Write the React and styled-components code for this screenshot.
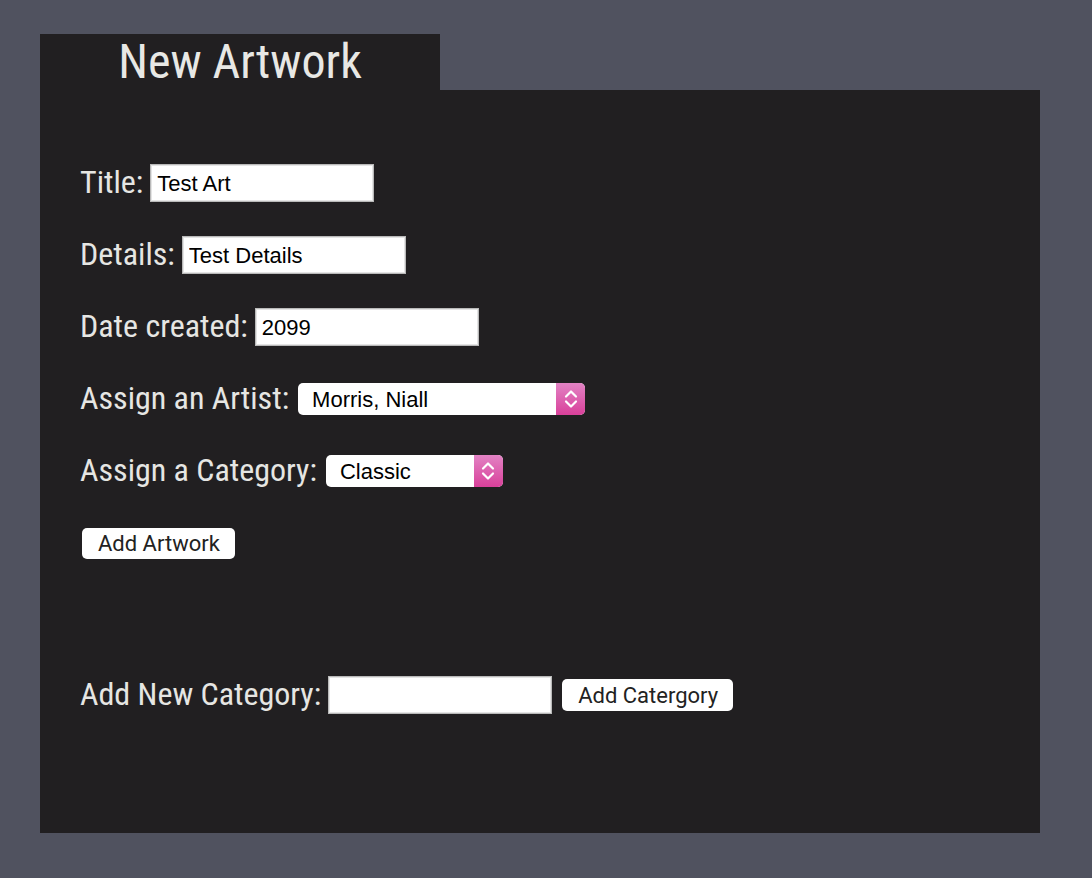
import React from 'react';
import styled, { createGlobalStyle } from 'styled-components';

const GlobalStyle = createGlobalStyle`
  body {
    margin: 0;
    background: #50525f;
    font-family: "Roboto Condensed", Roboto, sans-serif;
  }
`;

const Page = styled.div`
  padding: 34px 52px 45px 40px;
`;

const Tab = styled.div`
  width: 400px;
  height: 56px;
  background: #211f21;
  color: #e8e8e5;
  display: flex;
  align-items: center;
  justify-content: center;
  font-family: "Roboto Condensed", Roboto, sans-serif;
  font-stretch: condensed;
  font-size: 48px;
  line-height: 1;
`;

const Panel = styled.div`
  width: 1000px;
  height: 743px;
  box-sizing: border-box;
  background: #211f21;
  padding: 74px 40px 0;
  display: flex;
  flex-direction: column;
  gap: 34px;
`;

const Row = styled.div`
  display: flex;
  align-items: center;
  height: 38px;
  margin-top: ${p => p.$spaceTop || 0}px;
`;

const Label = styled.label`
  color: #e6e6e3;
  font-family: "Roboto Condensed", Roboto, sans-serif;
  font-stretch: condensed;
  font-size: 32px;
  line-height: 1;
  margin: 0 7px 3px 0;
  white-space: nowrap;
`;

const TextInput = styled.input`
  width: 224px;
  height: 38px;
  box-sizing: border-box;
  border: 1px solid #b9b9b9;
  box-shadow: inset 0 0 0 1px #e4e4e4;
  background: #fff;
  padding: 2px 6px 0;
  font-family: "Liberation Sans", Arial, sans-serif;
  font-size: 22px;
  color: #000;
  outline: none;
`;

const SelectWrap = styled.div`
  position: relative;
  display: inline-flex;
  margin-left: 2px;
  width: ${p => p.$width}px;
  height: 32px;
`;

const Select = styled.select`
  appearance: none;
  -webkit-appearance: none;
  width: 100%;
  height: 100%;
  border: none;
  border-radius: 5px;
  background: #fff;
  padding: 0 0 0 14px;
  font-family: "Liberation Sans", Arial, sans-serif;
  font-size: 22px;
  color: #000;
  outline: none;
`;

const Arrows = styled.span`
  position: absolute;
  right: 0;
  top: 0;
  width: 29px;
  height: 32px;
  border-radius: 0 5px 5px 0;
  background: linear-gradient(#e283c4, #d9409a);
  display: flex;
  align-items: center;
  justify-content: center;
  pointer-events: none;
`;

const Button = styled.button`
  height: ${p => p.$height || 31}px;
  padding: 0 15px 0 16px;
  margin-left: ${p => p.$offset || 0}px;
  border: none;
  border-radius: 5px;
  background: #fff;
  color: #222;
  font-family: Roboto, sans-serif;
  font-size: 22px;
  cursor: pointer;
`;

const Chevrons = () => (
  <svg width="14" height="22" viewBox="0 0 14 22" fill="none" stroke="#fff" strokeWidth="2.2" strokeLinecap="round" strokeLinejoin="round">
    <path d="M2 8.5 L7 3.5 L12 8.5" />
    <path d="M2 13.5 L7 18.5 L12 13.5" />
  </svg>
);

const Dropdown = ({ width, value, options }) => (
  <SelectWrap $width={width}>
    <Select defaultValue={value}>
      {options.map(o => (
        <option key={o}>{o}</option>
      ))}
    </Select>
    <Arrows>
      <Chevrons />
    </Arrows>
  </SelectWrap>
);

export default function App() {
  return (
    <Page>
      <GlobalStyle />
      <Tab>New Artwork</Tab>
      <Panel>
        <Row>
          <Label>Title:</Label>
          <TextInput defaultValue="Test Art" />
        </Row>
        <Row>
          <Label>Details:</Label>
          <TextInput defaultValue="Test Details" />
        </Row>
        <Row>
          <Label>Date created:</Label>
          <TextInput defaultValue="2099" />
        </Row>
        <Row>
          <Label>Assign an Artist:</Label>
          <Dropdown width={287} value="Morris, Niall" options={['Morris, Niall']} />
        </Row>
        <Row>
          <Label>Assign a Category:</Label>
          <Dropdown width={177} value="Classic" options={['Classic']} />
        </Row>
        <Row>
          <Button $offset={2}>Add Artwork</Button>
        </Row>
        <Row $spaceTop={80}>
          <Label>Add New Category:</Label>
          <TextInput />
          <Button $offset={10} $height={32}>Add Catergory</Button>
        </Row>
      </Panel>
    </Page>
  );
}
